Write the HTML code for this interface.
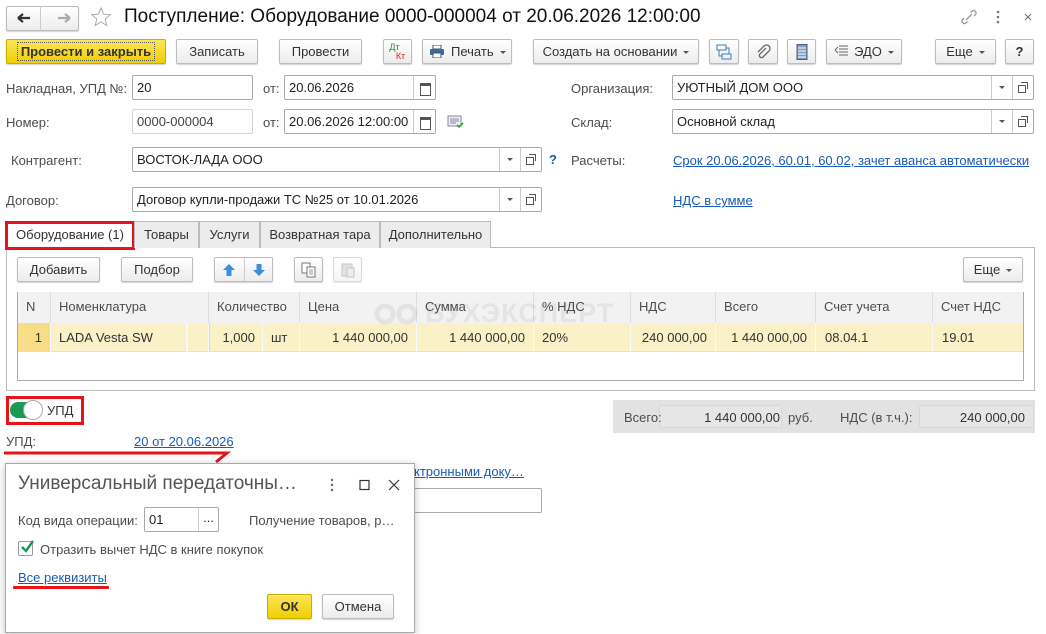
<!DOCTYPE html>
<html><head><meta charset="utf-8"><style>
*{box-sizing:border-box;margin:0;padding:0}
body{width:1046px;height:634px;background:#fff;font-family:"Liberation Sans",Arial,sans-serif;font-size:13px;color:#333;position:relative;overflow:hidden}
.a{position:absolute;white-space:nowrap}
.btn{position:absolute;height:25px;border:1px solid #bcbcbc;border-radius:2px;background:linear-gradient(#fff,#ececec);box-shadow:0 1px 1px rgba(0,0,0,.18);text-align:center;line-height:23px;color:#333;font-size:13px}
.y{background:linear-gradient(#fbe55a,#f0cf00);border-color:#c9ad00}
.in{position:absolute;height:25px;border:1px solid #a9a9a9;border-radius:2px;background:#fff;line-height:23px;padding-left:4px;color:#222;font-size:13px}
.lbl{position:absolute;color:#4d4d4d;white-space:nowrap}
.dd{position:absolute;top:0;bottom:0;border-left:1px solid #ccc;width:21px}
.dd:after{content:"";position:absolute;left:7px;top:10px;border:3px solid transparent;border-top:3px solid #555}
.op{position:absolute;top:0;bottom:0;border-left:1px solid #ccc;width:21px;right:0}
.op:before{content:"";position:absolute;left:5px;top:9px;width:6px;height:6px;border:1px solid #555}
.op:after{content:"";position:absolute;left:8px;top:6px;width:6px;height:6px;border:1px solid #555;border-left:none;border-bottom:none}
.cal{position:absolute;right:0;top:0;bottom:0;width:22px;border-left:1px solid #ccc}
.cal:after{content:"";position:absolute;left:6px;top:7px;width:9px;height:9px;border:1px solid #555;border-top-width:3px}
.link{position:absolute;color:#1a5bb5;text-decoration:underline;white-space:nowrap}
.tab{position:absolute;top:221px;height:27px;border:1px solid #bbb;border-bottom:none;background:#ececec;line-height:26px;text-align:center;color:#333}
.th{position:absolute;top:292px;height:31px;line-height:30px;padding-left:8px;color:#4d4d4d;border-right:1px solid #ddd;background:#f2f2f2}
.td{position:absolute;top:323px;height:29px;line-height:29px;border-right:1px solid #f8f8f8;color:#333;white-space:nowrap}
.car:after{content:"";display:inline-block;margin-left:6px;border:3px solid transparent;border-top:3px solid #555;vertical-align:-1px}
</style></head><body>

<div class="btn" style="left:6px;top:6px;width:73px;height:25px"></div>
<div class="a" style="left:40px;top:6px;width:1px;height:25px;background:#ccc"></div>
<svg class="a" style="left:14px;top:11px" width="60" height="14"><path d="M4 7h12M4 7l5-4M4 7l5 4" stroke="#333" stroke-width="2.2" fill="none"/><path d="M44 7h12M56 7l-5-4M56 7l-5 4" stroke="#aaa" stroke-width="2.2" fill="none"/></svg>
<svg class="a" style="left:90px;top:6px" width="22" height="22"><path d="M11 2l2.6 6.2 6.6.5-5 4.3 1.6 6.5L11 16l-5.8 3.5 1.6-6.5-5-4.3 6.6-.5z" fill="none" stroke="#aaa" stroke-width="1"/></svg>
<div class="a" style="left:124px;top:6px;font-size:19px;color:#111">Поступление: Оборудование 0000-000004 от 20.06.2026 12:00:00</div>
<svg class="a" style="left:958px;top:8px" width="80" height="18"><path d="M8 12l6-6M6 10l-1.5 1.5a2.5 2.5 0 003.5 3.5L9.5 13.5M16 8l1.5-1.5a2.5 2.5 0 00-3.5-3.5L12.5 4.5" stroke="#999" stroke-width="1.3" fill="none"/><circle cx="40" cy="4" r="1.3" fill="#777"/><circle cx="40" cy="9" r="1.3" fill="#777"/><circle cx="40" cy="14" r="1.3" fill="#777"/><path d="M67 6l6 6M73 6l-6 6" stroke="#777" stroke-width="1.2"/></svg>

<div class="btn y" style="left:6px;top:39px;width:160px;font-weight:bold;color:#333"><span style="border:1px dotted #555;padding:1px 3px">Провести и закрыть</span></div>
<div class="btn" style="left:176px;top:39px;width:82px">Записать</div>
<div class="btn" style="left:279px;top:39px;width:83px">Провести</div>
<div class="btn" style="left:383px;top:39px;width:29px;font-size:9px;line-height:9px;padding-top:3px"><span style="color:#1a9a2a;margin-left:-6px">Дт</span><br><span style="color:#e02020;margin-left:6px">Кт</span></div>
<div class="btn car" style="left:422px;top:39px;width:90px;text-align:left;padding-left:6px"><svg width="16" height="13" style="vertical-align:-2px;margin-right:6px"><rect x="4" y="0" width="8" height="4" fill="#fff" stroke="#456"/><rect x="1" y="4" width="14" height="6" rx="1" fill="#3d6b9c"/><rect x="4" y="8" width="8" height="5" fill="#fff" stroke="#456"/></svg>Печать</div>
<div class="btn car" style="left:533px;top:39px;width:166px">Создать на основании</div>
<div class="btn" style="left:709px;top:39px;width:30px"><svg width="16" height="16" style="margin-top:4px"><rect x="1" y="1" width="9" height="5" fill="none" stroke="#3d7cb8"/><rect x="6" y="10" width="9" height="5" fill="none" stroke="#3d7cb8"/><path d="M3 6v6h3M13 10V4h-3" stroke="#3d7cb8" fill="none"/></svg></div>
<div class="btn" style="left:748px;top:39px;width:30px"><svg width="16" height="16" style="margin-top:4px"><path d="M11 4L5 10a2 2 0 003 3l6-6a3.5 3.5 0 00-5-5L3 8" stroke="#666" stroke-width="1.3" fill="none"/></svg></div>
<div class="btn" style="left:787px;top:39px;width:29px"><svg width="12" height="16" style="margin-top:4px"><rect x="1" y="0.5" width="10" height="15" fill="#7f9fc0" stroke="#557"/><path d="M2 4h8M2 7h8M2 10h8M2 13h8" stroke="#fff"/></svg></div>
<div class="btn car" style="left:826px;top:39px;width:76px"><svg width="16" height="14" style="vertical-align:-2px;margin-right:4px"><path d="M5 2h9M5 5h9M5 8h9M5 11h9M1 6l3-3M1 6l3 3" stroke="#666" fill="none"/></svg>ЭДО</div>
<div class="btn car" style="left:935px;top:39px;width:61px">Еще</div>
<div class="btn" style="left:1005px;top:39px;width:29px;font-weight:bold">?</div>

<div class="lbl" style="left:6px;top:81px">Накладная, УПД №:</div>
<div class="in" style="left:132px;top:75px;width:121px">20</div>
<div class="lbl" style="left:263px;top:81px">от:</div>
<div class="in" style="left:284px;top:75px;width:152px">20.06.2026<span class="cal"></span></div>
<div class="lbl" style="left:571px;top:81px">Организация:</div>
<div class="in" style="left:672px;top:75px;width:362px">УЮТНЫЙ ДОМ ООО<span class="dd" style="right:21px"></span><span class="op"></span></div>
<div class="lbl" style="left:6px;top:115px">Номер:</div>
<div class="in" style="left:132px;top:109px;width:121px;border-color:#d5d5d5;color:#444">0000-000004</div>
<div class="lbl" style="left:263px;top:115px">от:</div>
<div class="in" style="left:284px;top:109px;width:152px">20.06.2026 12:00:00<span class="cal"></span></div>
<svg class="a" style="left:447px;top:115px" width="18" height="14"><rect x="1" y="1" width="13" height="10" fill="#eef" stroke="#889"/><path d="M3 4h9M3 6h9M3 8h6" stroke="#889"/><path d="M10 10l2 2 4-4" stroke="#2a2" stroke-width="1.6" fill="none"/></svg>
<div class="lbl" style="left:571px;top:115px">Склад:</div>
<div class="in" style="left:672px;top:109px;width:362px">Основной склад<span class="dd" style="right:21px"></span><span class="op"></span></div>
<div class="lbl" style="left:11px;top:153px">Контрагент:</div>
<div class="in" style="left:132px;top:147px;width:410px">ВОСТОК-ЛАДА ООО<span class="dd" style="right:21px"></span><span class="op"></span></div>
<div class="a" style="left:549px;top:152px;color:#1a5bb5;font-weight:bold">?</div>
<div class="lbl" style="left:571px;top:153px">Расчеты:</div>
<div class="link" style="left:673px;top:153px">Срок 20.06.2026, 60.01, 60.02, зачет аванса автоматически</div>
<div class="lbl" style="left:6px;top:193px">Договор:</div>
<div class="in" style="left:132px;top:187px;width:410px">Договор купли-продажи ТС №25 от 10.01.2026<span class="dd" style="right:21px"></span><span class="op"></span></div>
<div class="link" style="left:673px;top:193px">НДС в сумме</div>

<div class="a" style="left:6px;top:247px;width:1029px;height:144px;border:1px solid #bbb"></div>
<div class="tab" style="left:6px;width:128px;background:#fff;height:28px">Оборудование (1)</div>
<div class="a" style="left:5px;top:221px;width:130px;height:29px;border:3px solid #e5141b"></div>
<div class="tab" style="left:134px;width:65px">Товары</div>
<div class="tab" style="left:199px;width:61px">Услуги</div>
<div class="tab" style="left:260px;width:120px">Возвратная тара</div>
<div class="tab" style="left:380px;width:111px">Дополнительно</div>

<div class="btn" style="left:17px;top:257px;width:83px">Добавить</div>
<div class="btn" style="left:121px;top:257px;width:72px">Подбор</div>
<div class="btn" style="left:214px;top:257px;width:59px"></div>
<div class="a" style="left:244px;top:258px;width:1px;height:23px;background:#ccc"></div>
<svg class="a" style="left:221px;top:262px" width="46" height="16"><path d="M8 2l6 6h-3.5v6h-5V8H2z" fill="#3c8ddc"/><path d="M38 14l6-6h-3.5V2h-5v6H32z" fill="#3c8ddc"/></svg>
<div class="btn" style="left:294px;top:257px;width:29px"><svg width="16" height="16" style="margin-top:4px"><rect x="1" y="1" width="8" height="10" fill="#fff" stroke="#777"/><rect x="6" y="5" width="8" height="10" fill="#fff" stroke="#777"/><path d="M8 8h4M8 10h4M8 12h4" stroke="#999"/></svg></div>
<div class="btn" style="left:333px;top:257px;width:29px;opacity:.55"><svg width="16" height="16" style="margin-top:4px"><rect x="2" y="2" width="10" height="12" fill="#ccc" stroke="#999"/><rect x="7" y="6" width="7" height="9" fill="#ddd" stroke="#999"/></svg></div>
<div class="btn car" style="left:963px;top:257px;width:60px">Еще</div>

<div class="a" style="left:17px;top:292px;width:1007px;height:89px;border:1px solid #aaa"></div>
<div class="th" style="left:18px;width:33px">N</div>
<div class="th" style="left:51px;width:158px">Номенклатура</div>
<div class="th" style="left:209px;width:91px">Количество</div>
<div class="th" style="left:300px;width:117px">Цена</div>
<div class="th" style="left:417px;width:117px">Сумма</div>
<div class="th" style="left:534px;width:97px">% НДС</div>
<div class="th" style="left:631px;width:85px">НДС</div>
<div class="th" style="left:716px;width:100px">Всего</div>
<div class="th" style="left:816px;width:117px">Счет учета</div>
<div class="th" style="left:933px;width:90px;border-right:none">Счет НДС</div>
<div class="a" style="left:18px;top:323px;width:1005px;height:29px;background:#fbf1c8;border-bottom:1px solid #e8e0c0"></div>
<div class="td" style="left:18px;width:33px;background:#f7dd88;text-align:right;padding-right:8px">1</div>
<div class="td" style="left:51px;width:136px;padding-left:8px">LADA Vesta SW</div>
<div class="td" style="left:187px;width:22px;border-left:1px solid #f8f8f8"></div>
<div class="td" style="left:209px;width:54px;text-align:right;padding-right:7px;border-left:1px solid #e0d8b8">1,000</div>
<div class="td" style="left:263px;width:37px;padding-left:8px">шт</div>
<div class="td" style="left:300px;width:117px;text-align:right;padding-right:8px">1 440 000,00</div>
<div class="td" style="left:417px;width:117px;text-align:right;padding-right:8px">1 440 000,00</div>
<div class="td" style="left:534px;width:97px;padding-left:8px">20%</div>
<div class="td" style="left:631px;width:85px;text-align:right;padding-right:8px">240 000,00</div>
<div class="td" style="left:716px;width:100px;text-align:right;padding-right:8px">1 440 000,00</div>
<div class="td" style="left:816px;width:117px;padding-left:9px">08.04.1</div>
<div class="td" style="left:933px;width:90px;padding-left:9px;border-right:none">19.01</div>
<svg class="a" style="left:373px;top:300px" width="50" height="26"><circle cx="12" cy="14" r="8" fill="none" stroke="rgba(0,0,0,.06)" stroke-width="5"/><circle cx="34" cy="14" r="8" fill="none" stroke="rgba(0,0,0,.06)" stroke-width="5"/></svg>
<div class="a" style="left:425px;top:298px;font-size:27px;font-weight:bold;color:rgba(0,0,0,.055);letter-spacing:1px">БУХЭКСПЕРТ</div>

<div class="a" style="left:6px;top:396px;width:78px;height:29px;border:3px solid #e5141b"></div>
<div class="a" style="left:10px;top:402px;width:30px;height:16px;border-radius:8px;background:#1a9950"></div>
<div class="a" style="left:23px;top:400px;width:20px;height:20px;border-radius:50%;background:#fff;border:1px solid #aaa"></div>
<div class="a" style="left:47px;top:403px;color:#333">УПД</div>

<div class="a" style="left:613px;top:400px;width:422px;height:33px;background:#e2e2e2"></div>
<div class="a" style="left:659px;top:405px;width:123px;height:23px;background:#e6e6e6;border:1px solid #d8d8d8;border-radius:2px"></div>
<div class="a" style="left:919px;top:405px;width:115px;height:23px;background:#e6e6e6;border:1px solid #d8d8d8;border-radius:2px"></div>
<div class="lbl" style="left:624px;top:410px">Всего:</div>
<div class="a" style="left:660px;top:410px;width:120px;text-align:right">1 440 000,00</div>
<div class="lbl" style="left:788px;top:410px">руб.</div>
<div class="lbl" style="left:840px;top:410px">НДС (в т.ч.):</div>
<div class="a" style="left:920px;top:410px;width:105px;text-align:right">240 000,00</div>

<div class="lbl" style="left:6px;top:434px">УПД:</div>
<div class="link" style="left:134px;top:434px">20 от 20.06.2026</div>
<svg class="a" style="left:0;top:448px" width="250" height="20"><path d="M4 5H227L216 14" stroke="#e5141b" stroke-width="3" fill="none"/></svg>

<div class="link" style="left:414px;top:464px">ктронными доку…</div>
<div class="a" style="left:414px;top:488px;width:128px;height:25px;border:1px solid #aaa;border-radius:2px"></div>

<div class="a" style="left:5px;top:463px;width:410px;height:170px;background:#fff;border:1px solid #aaa;box-shadow:0 2px 8px rgba(0,0,0,.25)"></div>
<div class="a" style="left:18px;top:473px;font-size:19px;color:#555">Универсальный передаточны…</div>
<svg class="a" style="left:322px;top:476px" width="85" height="18"><circle cx="10" cy="4" r="1.2" fill="#666"/><circle cx="10" cy="9" r="1.2" fill="#666"/><circle cx="10" cy="14" r="1.2" fill="#666"/><rect x="38" y="4.5" width="9" height="9" fill="none" stroke="#333" stroke-width="1.2"/><path d="M67 4l10 10M77 4L67 14" stroke="#333" stroke-width="1.2"/></svg>
<div class="lbl" style="left:18px;top:513px">Код вида операции:</div>
<div class="in" style="left:144px;top:507px;width:75px">01<span style="position:absolute;right:0;top:0;bottom:0;width:20px;border-left:1px solid #ccc;text-align:center;line-height:20px">...</span></div>
<div class="lbl" style="left:249px;top:513px">Получение товаров, р…</div>
<div class="a" style="left:18px;top:541px;width:15px;height:15px;border:1px solid #999;border-radius:2px"></div>
<svg class="a" style="left:19px;top:539px" width="16" height="16"><path d="M3 8l4 4 7-10" stroke="#1a9950" stroke-width="2.4" fill="none"/></svg>
<div class="lbl" style="left:40px;top:542px">Отразить вычет НДС в книге покупок</div>
<div class="link" style="left:18px;top:570px">Все реквизиты</div>
<div class="a" style="left:13px;top:586px;width:96px;height:3px;background:#e5141b;border-radius:1px"></div>
<div class="btn y" style="left:267px;top:594px;width:45px;font-weight:bold">ОК</div>
<div class="btn" style="left:322px;top:594px;width:72px">Отмена</div>
</body></html>
